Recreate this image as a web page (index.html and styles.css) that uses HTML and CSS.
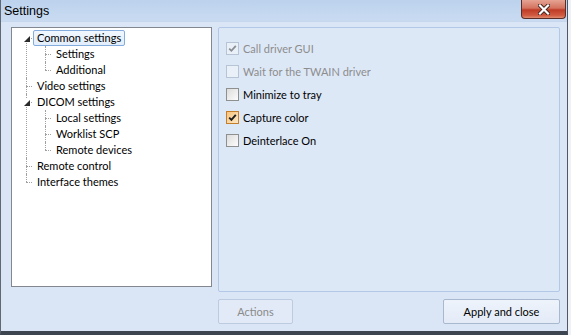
FILE: index.html
```html
<!DOCTYPE html>
<html lang="en">
<head>
  <meta charset="UTF-8" />
  <title>Settings</title>
  <link rel="stylesheet" href="styles.css">
</head>
<body>

<div class="window">
  <div class="titlebar">
    <span class="title">Settings</span>
    <div class="close">
      <svg width="12" height="11" viewBox="0 0 12 11">
        <path d="M2 1.5 L10 9.5 M10 1.5 L2 9.5" stroke="#43211c" stroke-width="4" stroke-linecap="square"/>
        <path d="M2 1.5 L10 9.5 M10 1.5 L2 9.5" stroke="#fff" stroke-width="2.2" stroke-linecap="square"/>
      </svg>
    </div>
  </div>

  <div class="client">
    <div class="tree">
      <ul class="root">
        <li class="first">
          <span class="exp"><svg width="6" height="6" viewBox="0 0 6 6"><polygon points="6,0 6,6 0,6" fill="#2b2b2b"/></svg></span>
          <span class="label selected">Common settings</span>
          <ul>
            <li><span class="label">Settings</span></li>
            <li><span class="label">Additional</span></li>
          </ul>
        </li>
        <li><span class="label">Video settings</span></li>
        <li>
          <span class="exp"><svg width="6" height="6" viewBox="0 0 6 6"><polygon points="6,0 6,6 0,6" fill="#2b2b2b"/></svg></span>
          <span class="label">DICOM settings</span>
          <ul>
            <li><span class="label">Local settings</span></li>
            <li><span class="label">Worklist SCP</span></li>
            <li><span class="label">Remote devices</span></li>
          </ul>
        </li>
        <li><span class="label">Remote control</span></li>
        <li><span class="label">Interface themes</span></li>
      </ul>
    </div>

    <div class="side">
      <div class="panel">
        <div class="check disabled checked"><span class="box"><svg width="11" height="11" viewBox="0 0 11 11"><path d="M2.2 5.6 L4.4 7.8 L8.8 2.8" fill="none" stroke="#8a8e94" stroke-width="1.8"/></svg></span>Call driver GUI</div>
        <div class="check disabled"><span class="box"></span>Wait for the TWAIN driver</div>
        <div class="check"><span class="box"></span>Minimize to tray</div>
        <div class="check hot"><span class="box"><svg width="11" height="11" viewBox="0 0 11 11"><path d="M2.2 5.6 L4.4 7.8 L8.8 2.8" fill="none" stroke="#1e1e1e" stroke-width="1.9"/></svg></span>Capture color</div>
        <div class="check"><span class="box"></span>Deinterlace On</div>
      </div>
      <div class="buttons">
        <div class="btn disabled">Actions</div>
        <div class="btn wide">Apply and close</div>
      </div>
    </div>
  </div>
</div>

</body>
</html>
```

FILE: styles.css
```css
html, body { margin: 0; padding: 0; }
body { width: 571px; height: 335px; overflow: hidden; background: #eef2f7; font-family: Lato, "Open Sans", sans-serif; font-size: 11px; color: #000; }

.window { width: 568px; height: 335px; box-sizing: border-box; background: #dae6f6; border-left: 1px solid #5f6873; border-right: 1px solid #4f5863; border-bottom: 4px solid #3d4550; display: flex; flex-direction: column; }

.titlebar { height: 22px; display: flex; align-items: flex-start; background: linear-gradient(#bcd2ed, #c9dbf1); border-bottom: 1px solid #c6d7ee; box-sizing: border-box; }
.title { font-family: "Liberation Sans", sans-serif; font-size: 12.5px; margin: 4px 0 0 3px; }
.close { margin-left: auto; margin-right: 1px; width: 45px; height: 19px; box-sizing: border-box; border: 1px solid #5a2d26; border-top: none; border-radius: 0 0 4px 4px; background: linear-gradient(#e6a393 0%, #d3735f 45%, #bf3c26 55%, #d05a40 85%, #e08a70 100%); display: flex; align-items: center; justify-content: center; }

.client { display: flex; padding: 5px 7px 0 10px; gap: 6px; }

.tree { width: 202px; height: 260px; box-sizing: border-box; background: #fff; border: 1px solid #828790; padding-top: 2px; }
.tree ul { list-style: none; margin: 0; padding: 0; }
.tree li { position: relative; line-height: 16px; }
.root > li { padding-left: 21px; }
.root > li::before { content: ""; position: absolute; left: 14px; top: 8px; width: 6px; border-top: 1px dotted #a0a0a0; }
.root > li::after { content: ""; position: absolute; left: 14px; top: 0; height: 100%; border-left: 1px dotted #a0a0a0; }
.root > li.first::after { top: 12px; height: calc(100% - 12px); }
.root > li:last-child::after { height: 8px; }
.root li li { padding-left: 19px; }
.root li li::before { content: ""; position: absolute; left: 12px; top: 8px; width: 6px; border-top: 1px dotted #a0a0a0; }
.root li li::after { content: ""; position: absolute; left: 12px; top: 0; height: 100%; border-left: 1px dotted #a0a0a0; }
.root li li:last-child::after { height: 8px; }

.exp { position: absolute; left: 10px; top: 4px; width: 9px; height: 9px; background: #fff; z-index: 1; display: flex; align-items: center; justify-content: center; }
.label { display: inline-block; height: 14px; line-height: 14px; padding: 0 3px; border: 1px solid transparent; border-radius: 2px; vertical-align: top; }
.label.selected { border-color: #84acdd; background: linear-gradient(#f1f7fe, #e2eefc); }

.side { display: flex; flex-direction: column; }
.panel { width: 342px; height: 265px; box-sizing: border-box; background: #dde8f7; border: 1px solid #b3c8e6; border-radius: 2px; padding-top: 9px; padding-left: 7px; }
.check { height: 23px; display: flex; align-items: center; }
.box { width: 13px; height: 13px; box-sizing: border-box; border: 1px solid #8e8f8f; background: linear-gradient(135deg, #dcdcdc, #fcfcfc); margin-right: 4px; display: flex; align-items: center; justify-content: center; }
.check.disabled { color: #8d8d8d; }
.check.disabled .box { border-color: #b6c4d6; background: #eaf0f8; }
.check.hot .box { border-color: #c57e2c; background: linear-gradient(135deg, #f8c47d, #fde7c5); }

.buttons { display: flex; justify-content: space-between; margin-top: 7px; }
.btn { width: 75px; height: 25px; box-sizing: border-box; border: 1px solid #aebfd8; border-radius: 2px; background: linear-gradient(#eef3fb, #e3ebf7); display: flex; align-items: center; justify-content: center; }
.btn.wide { width: 117px; border-color: #a8b8ce; }
.btn.disabled { color: #8a8a8a; border-color: #bccbe0; background: #e2eaf7; }
```
